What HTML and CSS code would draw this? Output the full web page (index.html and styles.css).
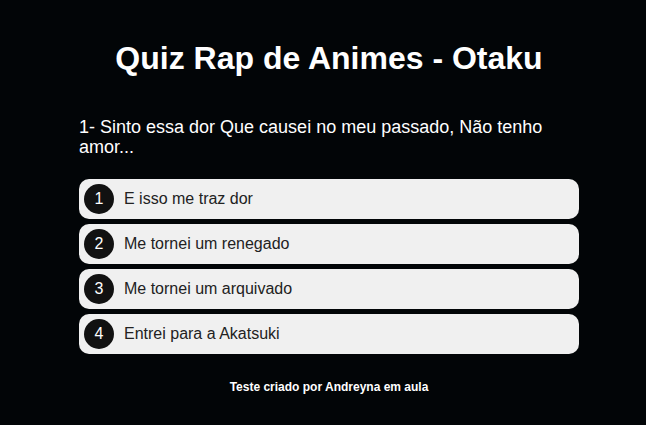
FILE: index.html
```html
<!DOCTYPE html>
<html lang="pt-BR">
<head>
<meta charset="utf-8">
<title>Quiz Rap de Animes - Otaku</title>
<link rel="stylesheet" href="styles.css">
</head>
<body>
<main class="quiz">
  <h1 class="title">Quiz Rap de Animes - Otaku</h1>
  <p class="question">1- Sinto essa dor Que causei no meu passado, Não tenho amor...</p>
  <ul class="options">
    <li class="option"><span class="num">1</span><span class="label">E isso me traz dor</span></li>
    <li class="option"><span class="num">2</span><span class="label">Me tornei um renegado</span></li>
    <li class="option"><span class="num">3</span><span class="label">Me tornei um arquivado</span></li>
    <li class="option"><span class="num">4</span><span class="label">Entrei para a Akatsuki</span></li>
  </ul>
  <footer class="footer">Teste criado por Andreyna em aula</footer>
</main>
</body>
</html>
```

FILE: styles.css
```css
html, body {
  margin: 0;
  padding: 0;
  background: #020507;
}
body {
  font-family: "Liberation Sans", Arial, sans-serif;
  color: #fff;
  padding-left: 12px;
}
.quiz {
  width: 500px;
  margin: 0 auto;
  padding-top: 40px;
}
.title {
  margin: 0;
  text-align: center;
  font-size: 32px;
  font-weight: bold;
  line-height: 37px;
}
.question {
  margin: 40px 0 0;
  font-size: 18px;
  line-height: 20px;
}
.options {
  list-style: none;
  margin: 22px 0 0;
  padding: 0;
  display: flex;
  flex-direction: column;
  gap: 5px;
}
.option {
  height: 40px;
  background: #f0f0f0;
  border-radius: 10px;
  display: flex;
  align-items: center;
  padding-left: 5px;
  color: #222;
  font-size: 16px;
}
.num {
  width: 30px;
  height: 30px;
  border-radius: 50%;
  background: #111;
  color: #fff;
  display: flex;
  align-items: center;
  justify-content: center;
  font-size: 16px;
  margin-right: 10px;
}
.footer {
  margin-top: 26px;
  text-align: center;
  font-size: 12px;
  font-weight: bold;
}
```
